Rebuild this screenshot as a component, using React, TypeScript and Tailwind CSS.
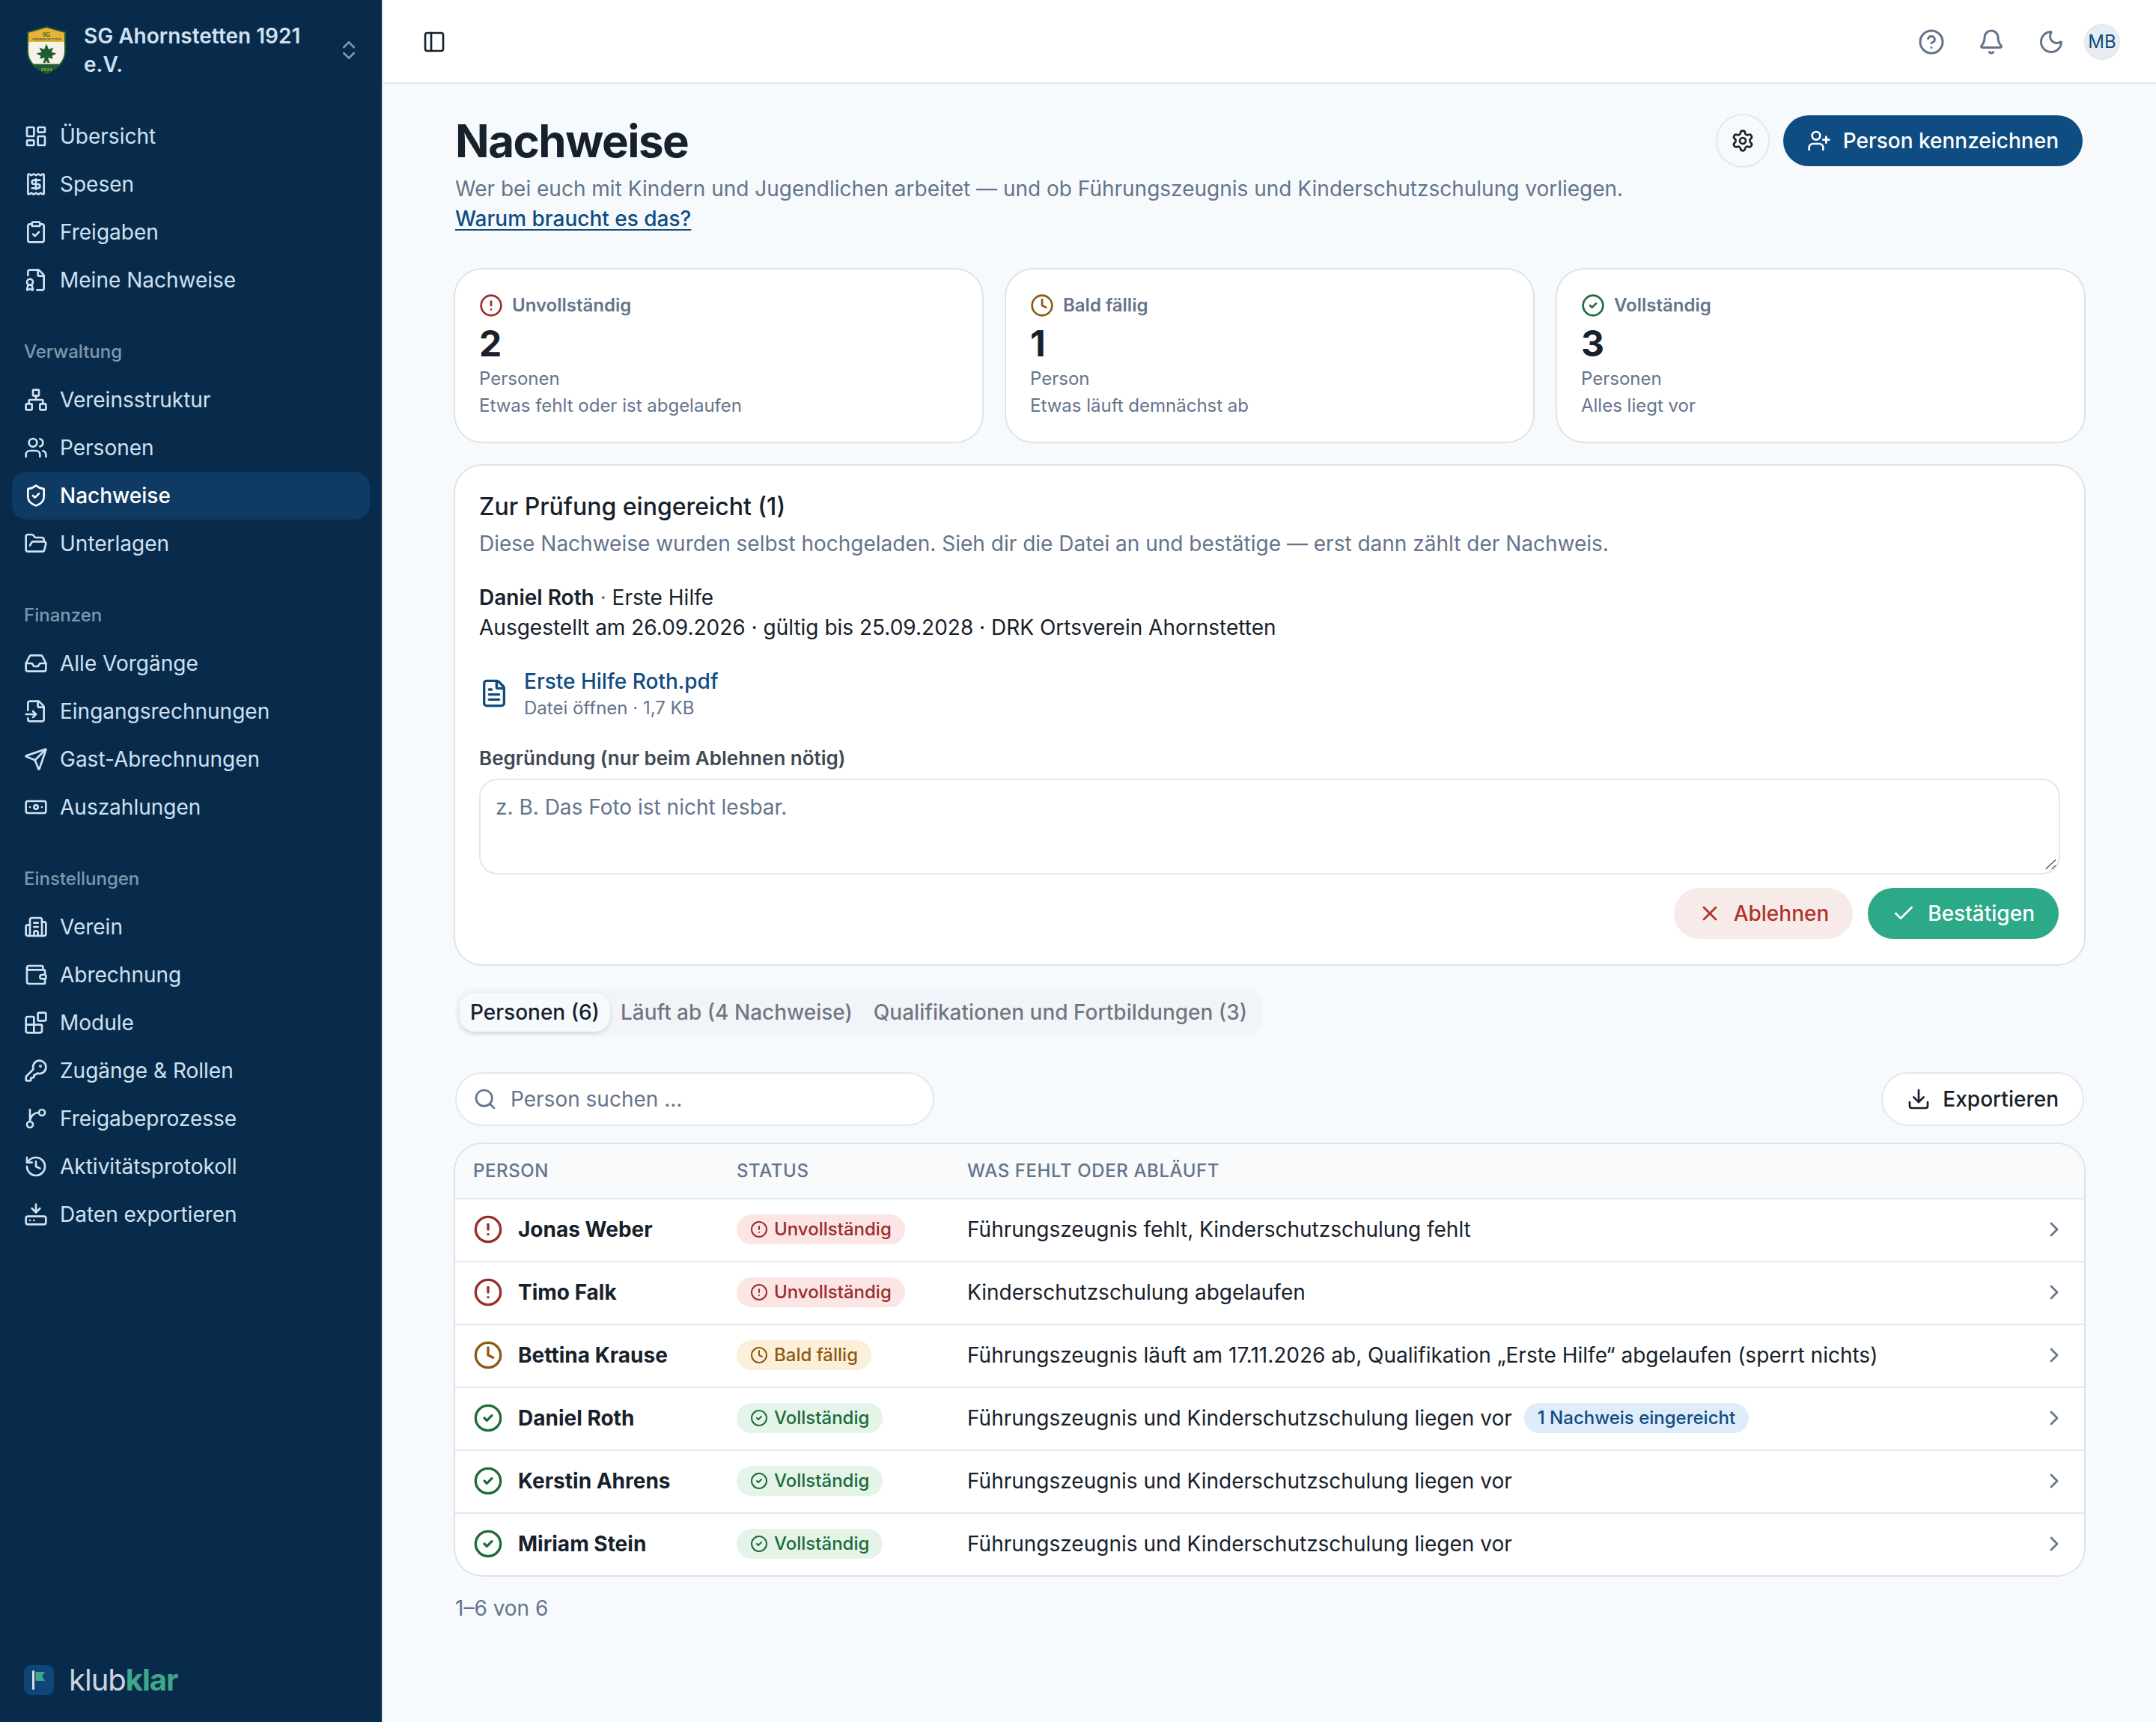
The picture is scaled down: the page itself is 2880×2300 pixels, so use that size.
import type { ReactNode } from 'react';
import {
  Banknote,
  Bell,
  Blocks,
  Building2,
  Check,
  ChevronRight,
  ChevronsUpDown,
  CircleAlert,
  CircleCheck,
  CircleHelp,
  ClipboardCheck,
  Clock,
  Download,
  FileBadge,
  FileInput,
  FileText,
  FolderOpen,
  HardDriveDownload,
  History,
  Inbox,
  KeyRound,
  LayoutDashboard,
  Moon,
  Network,
  PanelLeft,
  Search,
  Send,
  Settings,
  ShieldCheck,
  UserPlus,
  Users,
  Wallet,
  X,
  createLucideIcon,
  type LucideIcon,
} from 'lucide-react';

type Status = 'missing' | 'soon' | 'complete';

interface NavItem {
  label: string;
  icon: LucideIcon;
  active?: boolean;
}

const ReceiptWavy = createLucideIcon('receipt-wavy', [
  ['path', { d: 'M12 17V7', key: 'bar' }],
  ['path', { d: 'M16 8h-6a2 2 0 0 0 0 4h4a2 2 0 0 1 0 4H8', key: 'sign' }],
  [
    'path',
    {
      d: 'M4 3a1 1 0 0 1 1-1 1.3 1.3 0 0 1 .7.2l.933.6a1.3 1.3 0 0 0 1.4 0l.934-.6a1.3 1.3 0 0 1 1.4 0l.933.6a1.3 1.3 0 0 0 1.4 0l.933-.6a1.3 1.3 0 0 1 1.4 0l.934.6a1.3 1.3 0 0 0 1.4 0l.933-.6A1.3 1.3 0 0 1 19 2a1 1 0 0 1 1 1v18a1 1 0 0 1-1 1 1.3 1.3 0 0 1-.7-.2l-.933-.6a1.3 1.3 0 0 0-1.4 0l-.934.6a1.3 1.3 0 0 1-1.4 0l-.933-.6a1.3 1.3 0 0 0-1.4 0l-.933.6a1.3 1.3 0 0 1-1.4 0l-.934-.6a1.3 1.3 0 0 0-1.4 0l-.933.6a1.3 1.3 0 0 1-.7.2 1 1 0 0 1-1-1z',
      key: 'paper',
    },
  ],
]);

const Branch = createLucideIcon('branch', [
  ['path', { d: 'M15 6a9 9 0 0 0-9 9V3', key: 'line' }],
  ['circle', { cx: '18', cy: '6', r: '3', key: 'top' }],
  ['circle', { cx: '6', cy: '18', r: '3', key: 'bottom' }],
]);

const navGroups: { title?: string; items: NavItem[] }[] = [
  {
    items: [
      { label: 'Übersicht', icon: LayoutDashboard },
      { label: 'Spesen', icon: ReceiptWavy },
      { label: 'Freigaben', icon: ClipboardCheck },
      { label: 'Meine Nachweise', icon: FileBadge },
    ],
  },
  {
    title: 'Verwaltung',
    items: [
      { label: 'Vereinsstruktur', icon: Network },
      { label: 'Personen', icon: Users },
      { label: 'Nachweise', icon: ShieldCheck, active: true },
      { label: 'Unterlagen', icon: FolderOpen },
    ],
  },
  {
    title: 'Finanzen',
    items: [
      { label: 'Alle Vorgänge', icon: Inbox },
      { label: 'Eingangsrechnungen', icon: FileInput },
      { label: 'Gast-Abrechnungen', icon: Send },
      { label: 'Auszahlungen', icon: Banknote },
    ],
  },
  {
    title: 'Einstellungen',
    items: [
      { label: 'Verein', icon: Building2 },
      { label: 'Abrechnung', icon: Wallet },
      { label: 'Module', icon: Blocks },
      { label: 'Zugänge & Rollen', icon: KeyRound },
      { label: 'Freigabeprozesse', icon: Branch },
      { label: 'Aktivitätsprotokoll', icon: History },
      { label: 'Daten exportieren', icon: HardDriveDownload },
    ],
  },
];

const statusMeta: Record<Status, { label: string; icon: LucideIcon; color: string; badge: string }> = {
  missing: { label: 'Unvollständig', icon: CircleAlert, color: 'text-[#9b2c2c]', badge: 'bg-[#fbe5e5] text-[#9b2c2c]' },
  soon: { label: 'Bald fällig', icon: Clock, color: 'text-[#8a5a12]', badge: 'bg-[#fdf0db] text-[#8a5a12]' },
  complete: { label: 'Vollständig', icon: CircleCheck, color: 'text-[#1e6b3a]', badge: 'bg-[#e4f4e8] text-[#1e6b3a]' },
};

const stats: { status: Status; count: number; unit: string; hint: string }[] = [
  { status: 'missing', count: 2, unit: 'Personen', hint: 'Etwas fehlt oder ist abgelaufen' },
  { status: 'soon', count: 1, unit: 'Person', hint: 'Etwas läuft demnächst ab' },
  { status: 'complete', count: 3, unit: 'Personen', hint: 'Alles liegt vor' },
];

const people: { name: string; status: Status; detail: string; note?: string }[] = [
  { name: 'Jonas Weber', status: 'missing', detail: 'Führungszeugnis fehlt, Kinderschutzschulung fehlt' },
  { name: 'Timo Falk', status: 'missing', detail: 'Kinderschutzschulung abgelaufen' },
  {
    name: 'Bettina Krause',
    status: 'soon',
    detail: 'Führungszeugnis läuft am 17.11.2026 ab, Qualifikation „Erste Hilfe“ abgelaufen (sperrt nichts)',
  },
  {
    name: 'Daniel Roth',
    status: 'complete',
    detail: 'Führungszeugnis und Kinderschutzschulung liegen vor',
    note: '1 Nachweis eingereicht',
  },
  { name: 'Kerstin Ahrens', status: 'complete', detail: 'Führungszeugnis und Kinderschutzschulung liegen vor' },
  { name: 'Miriam Stein', status: 'complete', detail: 'Führungszeugnis und Kinderschutzschulung liegen vor' },
];

function ClubCrest() {
  return (
    <svg viewBox="0 0 54 64" className="h-8 w-[27px]">
      <defs>
        <clipPath id="shield">
          <path d="M27 1 52 8V34C52 48 41 57 27 63 13 57 2 48 2 34V8Z" />
        </clipPath>
      </defs>
      <g clipPath="url(#shield)">
        <rect width="54" height="64" fill="#f6f2e7" />
        <rect width="54" height="21" fill="#e8b23a" />
        <rect y="50.5" width="54" height="14" fill="#1d5c30" />
      </g>
      <path d="M27 1 52 8V34C52 48 41 57 27 63 13 57 2 48 2 34V8Z" fill="none" stroke="#1d5c30" strokeWidth="2" />
      <path
        d="M27 23.5 30 31 36.5 28.5 33.5 34.5 40.5 36.5 34.5 39.5 36 43.5 29 42 31.5 49H28.5L27 45.5 25.5 49H22.5L25 42 18 43.5 19.5 39.5 13.5 36.5 20.5 34.5 17.5 28.5 24 31Z"
        fill="#1d5c30"
      />
      <text x="27" y="13.5" textAnchor="middle" fontSize="8" className="fill-[#1d5c30] font-['Liberation_Serif',serif] font-bold">
        SG
      </text>
      <text
        x="27"
        y="19"
        textAnchor="middle"
        fontSize="5"
        textLength="40"
        lengthAdjust="spacingAndGlyphs"
        className="fill-[#1d5c30] font-['Liberation_Serif',serif] font-bold"
      >
        AHORNSTETTEN
      </text>
      <text x="27" y="60" textAnchor="middle" fontSize="6" textLength="15" className="fill-[#e8b23a] font-['Liberation_Serif',serif] font-bold">
        1921
      </text>
    </svg>
  );
}

function Sidebar() {
  return (
    <aside className="flex w-64 shrink-0 flex-col border-r border-[#e2e8f0] bg-[#092b4b] text-[#cfe1f2]">
      <div className="p-2">
        <button className="flex h-[51px] w-full items-center gap-2 px-1.5 text-left">
          <span className="flex w-[34px] shrink-0 justify-center">
            <ClubCrest />
          </span>
          <span className="flex-1 leading-[19px] font-semibold">SG Ahornstetten 1921 e.V.</span>
          <ChevronsUpDown className="size-4 opacity-60" />
        </button>
      </div>
      <nav className="flex-1">
        {navGroups.map((group, i) => (
          <div key={i} className="p-2">
            {group.title && (
              <div className="flex h-8 items-center px-2 text-xs font-medium text-[#cfe1f2]/60">{group.title}</div>
            )}
            {group.items.map(({ label, icon: Icon, active }) => (
              <a
                key={label}
                className={
                  active
                    ? 'flex h-8 items-center gap-2 rounded-[10px] bg-[#0e3a63] px-2 font-medium text-white'
                    : 'flex h-8 items-center gap-2 rounded-[10px] px-2'
                }
              >
                <Icon className="size-4" />
                {label}
              </a>
            ))}
          </div>
        ))}
      </nav>
      <div className="flex h-14 items-center gap-2.5 px-4">
        <svg viewBox="0 0 40 40" className="size-5">
          <rect width="40" height="40" rx="9" fill="#0f4677" />
          <rect x="11" y="7" width="3" height="26" rx="1.5" fill="#d7dde4" />
          <path d="M15.5 9H28l-4 6 4 6H15.5Z" fill="#3fa88c" />
        </svg>
        <span className="text-xl tracking-tight text-[#ccd5de]">
          klub<span className="font-bold text-[#3fa88c]">klar</span>
        </span>
      </div>
    </aside>
  );
}

function TopBar() {
  return (
    <header className="flex h-14 items-center border-b border-[#e2e8f0] bg-white px-5 pt-px">
      <button className="flex size-7 items-center justify-center">
        <PanelLeft className="size-4" />
      </button>
      <div className="ml-auto flex items-center gap-1 pr-1 text-[#64748b]">
        <button className="flex size-9 items-center justify-center">
          <CircleHelp className="size-[18px]" />
        </button>
        <button className="flex size-9 items-center justify-center">
          <Bell className="size-[18px]" />
        </button>
        <button className="flex size-9 items-center justify-center">
          <Moon className="size-[18px]" />
        </button>
        <span className="flex size-6 items-center justify-center rounded-full border border-[#e2e8f0] bg-[#e7edf3] text-xs text-[#0f4c81]">
          MB
        </span>
      </div>
    </header>
  );
}

function Card({ className, children }: { className: string; children: ReactNode }) {
  return <div className={`rounded-[18px] bg-white ring-1 ring-[#17212b]/10 ${className}`}>{children}</div>;
}

function StatusBadge({ status }: { status: Status }) {
  const { label, icon: Icon, badge } = statusMeta[status];
  return (
    <span className={`inline-flex h-5 items-center gap-1 rounded-full px-[9px] text-xs font-medium ${badge}`}>
      <Icon className="size-3" />
      {label}
    </span>
  );
}

function ReviewCard() {
  return (
    <Card className="mt-4 p-4">
      <h2 className="text-base leading-[23px] font-medium">Zur Prüfung eingereicht (1)</h2>
      <p className="mt-[3px] text-[#64748b]">
        Diese Nachweise wurden selbst hochgeladen. Sieh dir die Datei an und bestätige — erst dann zählt der Nachweis.
      </p>
      <div className="mt-4">
        <p>
          <span className="font-semibold">Daniel Roth</span>
          <span className="text-[#64748b]"> · </span>
          Erste Hilfe
        </p>
        <p>Ausgestellt am 26.09.2026 · gültig bis 25.09.2028 · DRK Ortsverein Ahornstetten</p>
      </div>
      <a className="mt-4 flex items-center gap-2.5">
        <FileText className="size-5 text-[#0f4c81]" />
        <span className="flex flex-col">
          <span className="font-medium text-[#0f4c81]">Erste Hilfe Roth.pdf</span>
          <span className="text-xs text-[#64748b]">Datei öffnen · 1,7 KB</span>
        </span>
      </a>
      <label className="mt-4 block text-[13px] leading-[19px] font-semibold text-[#3f4a54]">
        Begründung (nur beim Ablehnen nötig)
      </label>
      <div className="relative mt-1">
        <textarea
          placeholder="z. B. Das Foto ist nicht lesbar."
          className="block h-16 w-full resize-none rounded-xl border border-[#e2e8f0] px-2.5 py-2 placeholder:text-[#64748b]"
        />
        {/* Resize grip */}
        <svg viewBox="0 0 8 8" className="absolute right-0.5 bottom-[3px] size-2" stroke="#4b4b4b" strokeWidth="0.6">
          <path d="M0.4 7.4 7.2 1M4.4 7.4 7.2 4.8" />
        </svg>
      </div>
      <div className="mt-2 flex justify-end gap-2">
        <button className="flex h-9 items-center gap-2 rounded-[18px] border border-transparent bg-[#f7ebe9] bg-clip-padding px-4 font-medium text-[#b0342a]">
          <X className="size-4" />
          Ablehnen
        </button>
        <button className="flex h-9 items-center gap-2 rounded-[18px] border border-transparent bg-[#2ca987] bg-clip-padding px-4 font-medium text-white">
          <Check className="size-4" />
          Bestätigen
        </button>
      </div>
    </Card>
  );
}

function PeopleTable() {
  return (
    <Card className="mt-3 overflow-hidden">
      <div className="flex h-[37px] items-center border-b border-[#e2e8f0] bg-[#f8fafc] text-xs font-medium tracking-wide text-[#64748b] uppercase">
        <div className="w-44 px-3">Person</div>
        <div className="w-[154px] px-3">Status</div>
        <div className="px-3">Was fehlt oder abläuft</div>
      </div>
      {people.map(({ name, status, detail, note }) => {
        const { icon: Icon, color } = statusMeta[status];
        return (
          <div
            key={name}
            className="flex h-[42px] items-center border-b border-[#e2e8f0] pb-px last:h-[41px] last:border-b-0"
          >
            <div className="flex w-44 items-center gap-2.5 px-3 font-bold">
              <Icon className={`size-5 ${color}`} />
              {name}
            </div>
            <div className="flex w-[154px] px-3">
              <StatusBadge status={status} />
            </div>
            <div className="flex flex-1 items-center gap-2 px-3">
              {detail}
              {note && (
                <span className="flex h-5 items-center rounded-full bg-[#dfecf9] px-[9px] text-xs font-medium text-[#0f4c81]">
                  {note}
                </span>
              )}
            </div>
            <ChevronRight className="mr-3 size-4 text-[#64748b]" />
          </div>
        );
      })}
    </Card>
  );
}

export default function App() {
  return (
    <div className="flex h-[1150px] w-[1440px] overflow-hidden bg-[#f6fafd] font-[Inter,sans-serif] text-sm text-[#17212b] [zoom:2]">
      <Sidebar />
      <div className="flex flex-1 flex-col">
        <TopBar />
        <main className="px-12 pt-5">
          {/* Page heading */}
          <div className="flex items-start justify-between">
            <div>
              <h1 className="text-3xl leading-9 font-bold tracking-tight">Nachweise</h1>
              <p className="mt-1 text-[#64748b]">
                Wer bei euch mit Kindern und Jugendlichen arbeitet — und ob Führungszeugnis und Kinderschutzschulung
                vorliegen.
              </p>
              <a className="font-medium text-[#0f4c81] underline underline-offset-2">Warum braucht es das?</a>
            </div>
            <div className="flex shrink-0 gap-2">
              <button className="flex size-9 items-center justify-center rounded-[18px] border border-[#e2e8f0]">
                <Settings className="size-4" />
              </button>
              <button className="flex h-9 items-center gap-2 rounded-[18px] border border-transparent bg-[#0f4c81] bg-clip-padding px-4 font-medium text-white">
                <UserPlus className="size-4" />
                Person kennzeichnen
              </button>
            </div>
          </div>

          {/* Status overview */}
          <div className="mt-6 grid grid-cols-3 gap-4">
            {stats.map(({ status, count, unit, hint }) => {
              const { label, icon: Icon, color } = statusMeta[status];
              return (
                <Card key={status} className="h-[115px] p-4 text-xs text-[#64748b]">
                  <div className="flex h-4 items-center gap-1.5 font-semibold">
                    <Icon className={`size-4 ${color}`} />
                    {label}
                  </div>
                  <div className="mt-0.5 text-2xl leading-[31px] font-bold text-[#17212b]">{count}</div>
                  <div>{unit}</div>
                  <div className="mt-0.5">{hint}</div>
                </Card>
              );
            })}
          </div>

          <ReviewCard />

          {/* Tabs */}
          <div className="mt-4 flex h-8 w-fit rounded-xl bg-[#f1f4f9] p-[3px] font-medium text-[#17212b]/60">
            <button className="rounded-[10px] bg-[#f6fafd] px-[7px] text-[#17212b] shadow-sm">Personen (6)</button>
            <button className="px-[7px]">Läuft ab (4 Nachweise)</button>
            <button className="px-[7px]">Qualifikationen und Fortbildungen (3)</button>
          </div>

          {/* Search and export */}
          <div className="mt-6 flex justify-between">
            <div className="flex h-9 w-80 items-center gap-[9px] rounded-[18px] border border-[#e2e8f0] bg-white px-[11px] text-[#64748b]">
              <Search className="size-4" />
              Person suchen ...
            </div>
            <button className="flex h-9 items-center gap-2 rounded-[18px] border border-[#e2e8f0] bg-white px-4 font-medium">
              <Download className="size-4" />
              Exportieren
            </button>
          </div>

          <PeopleTable />

          <p className="mt-3 text-[#64748b]">1–6 von 6</p>
        </main>
      </div>
    </div>
  );
}
